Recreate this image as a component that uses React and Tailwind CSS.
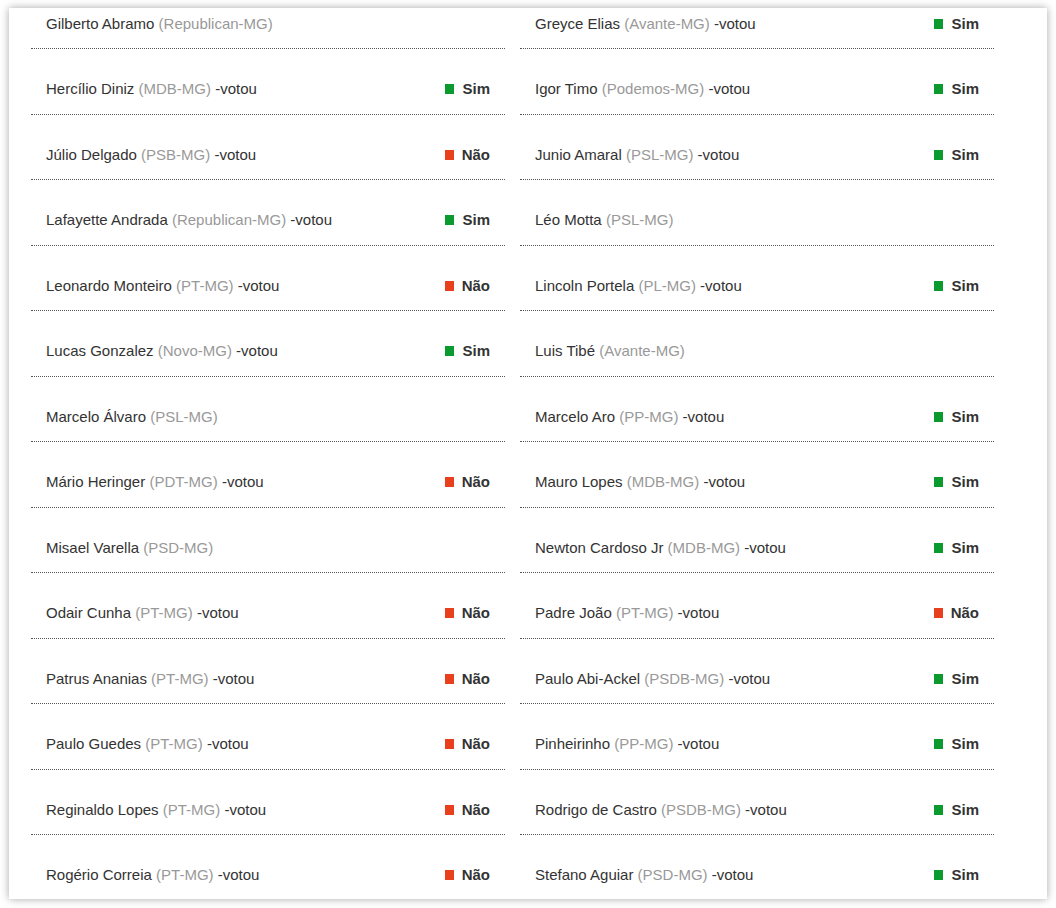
import React from 'react';

// Lista de votos por deputado (duas colunas)
const leftCol = [
  { name: 'Gilberto Abramo', party: 'Republican-MG', vote: null, voted: false },
  { name: 'Hercílio Diniz', party: 'MDB-MG', vote: 'Sim', voted: true },
  { name: 'Júlio Delgado', party: 'PSB-MG', vote: 'Não', voted: true },
  { name: 'Lafayette Andrada', party: 'Republican-MG', vote: 'Sim', voted: true },
  { name: 'Leonardo Monteiro', party: 'PT-MG', vote: 'Não', voted: true },
  { name: 'Lucas Gonzalez', party: 'Novo-MG', vote: 'Sim', voted: true },
  { name: 'Marcelo Álvaro', party: 'PSL-MG', vote: null, voted: false },
  { name: 'Mário Heringer', party: 'PDT-MG', vote: 'Não', voted: true },
  { name: 'Misael Varella', party: 'PSD-MG', vote: null, voted: false },
  { name: 'Odair Cunha', party: 'PT-MG', vote: 'Não', voted: true },
  { name: 'Patrus Ananias', party: 'PT-MG', vote: 'Não', voted: true },
  { name: 'Paulo Guedes', party: 'PT-MG', vote: 'Não', voted: true },
  { name: 'Reginaldo Lopes', party: 'PT-MG', vote: 'Não', voted: true },
  { name: 'Rogério Correia', party: 'PT-MG', vote: 'Não', voted: true },
];

const rightCol = [
  { name: 'Greyce Elias', party: 'Avante-MG', vote: 'Sim', voted: true },
  { name: 'Igor Timo', party: 'Podemos-MG', vote: 'Sim', voted: true },
  { name: 'Junio Amaral', party: 'PSL-MG', vote: 'Sim', voted: true },
  { name: 'Léo Motta', party: 'PSL-MG', vote: null, voted: false },
  { name: 'Lincoln Portela', party: 'PL-MG', vote: 'Sim', voted: true },
  { name: 'Luis Tibé', party: 'Avante-MG', vote: null, voted: false },
  { name: 'Marcelo Aro', party: 'PP-MG', vote: 'Sim', voted: true },
  { name: 'Mauro Lopes', party: 'MDB-MG', vote: 'Sim', voted: true },
  { name: 'Newton Cardoso Jr', party: 'MDB-MG', vote: 'Sim', voted: true },
  { name: 'Padre João', party: 'PT-MG', vote: 'Não', voted: true },
  { name: 'Paulo Abi-Ackel', party: 'PSDB-MG', vote: 'Sim', voted: true },
  { name: 'Pinheirinho', party: 'PP-MG', vote: 'Sim', voted: true },
  { name: 'Rodrigo de Castro', party: 'PSDB-MG', vote: 'Sim', voted: true },
  { name: 'Stefano Aguiar', party: 'PSD-MG', vote: 'Sim', voted: true },
];

const VoteRow = ({ item, first, last }) => {
  const pad = first ? 'pt-[6px] pb-[14px]' : last ? 'pt-[30px] pb-[14px]' : 'pt-[30px] pb-[14.5px]';
  const border = last ? '' : 'border-b border-dotted border-[#555]';
  return (
    <div className={`flex items-center justify-between pl-[15px] pr-[15px] leading-[20px] ${pad} ${border}`}>
      <span className="text-[#333]">
        {item.name} <span className="text-[#999]">({item.party})</span>
        {item.voted && ' -votou'}
      </span>
      {item.vote && (
        <span className="flex items-center w-[45px]">
          <span className={`w-[10px] h-[10px] mr-[8px] ${item.vote === 'Sim' ? 'bg-[#0a9a2e]' : 'bg-[#e8401c]'}`}></span>
          <span className="font-bold text-[#333]">{item.vote}</span>
        </span>
      )}
    </div>
  );
};

export default function App() {
  const rows = leftCol.map((l, i) => [l, rightCol[i]]);
  return (
    <div className="bg-white min-h-[908px] pt-[8px] px-[9px]" style={{ fontFamily: '"Liberation Sans", Arial, sans-serif' }}>
      <div className="w-[1038px] bg-white shadow-[0_0_8px_rgba(0,0,0,0.35)] pl-[22px] text-[15px]">
        <div className="grid grid-cols-[474px_474px] gap-x-[15px]">
          {rows.map(([l, r], i) => (
            <React.Fragment key={i}>
              <VoteRow item={l} first={i === 0} last={i === rows.length - 1} />
              <VoteRow item={r} first={i === 0} last={i === rows.length - 1} />
            </React.Fragment>
          ))}
        </div>
      </div>
    </div>
  );
}
